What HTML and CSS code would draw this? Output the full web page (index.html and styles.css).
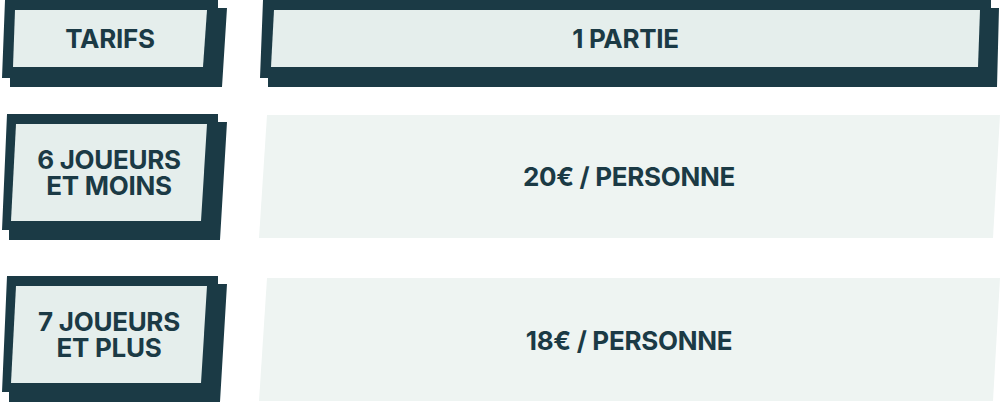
FILE: index.html
```html
<!DOCTYPE html>
<html lang="fr">
<head>
<meta charset="utf-8">
<title>Tarifs</title>
<link rel="stylesheet" href="styles.css">
</head>
<body>
<div class="table">
  <div class="row row-head">
    <div class="label label-head">
      <div class="label-inner label-inner-head">TARIFS</div>
    </div>
    <div class="head-wide">
      <div class="head-wide-inner">1 PARTIE</div>
    </div>
  </div>
  <div class="row row-2">
    <div class="label label-tall">
      <div class="label-inner label-inner-tall">6 JOUEURS<br>ET MOINS</div>
    </div>
    <div class="price">20€ / PERSONNE</div>
  </div>
  <div class="row row-3">
    <div class="label label-tall">
      <div class="label-inner label-inner-tall">7 JOUEURS<br>ET PLUS</div>
    </div>
    <div class="price">18€ / PERSONNE</div>
  </div>
</div>
</body>
</html>
```

FILE: styles.css
```css
html, body {
  margin: 0;
  padding: 0;
  background: #ffffff;
  overflow: hidden;
}

.table {
  width: 1000px;
  height: 403px;
  display: flex;
  flex-direction: column;
  font-family: Inter, "Liberation Sans", sans-serif;
  font-weight: 700;
  color: #1b3a45;
  font-size: 26px;
  letter-spacing: -0.3px;
}

.row {
  display: flex;
  align-items: flex-start;
}

.row-head { height: 87px; }
.row-2 { margin-top: 27px; height: 126px; }
.row-3 { margin-top: 36px; height: 127px; }

/* label boxes (dark frame with shadow) */
.label {
  width: 227px;
  background: #1b3a45;
  box-sizing: border-box;
  flex: none;
}

.label-head {
  height: 87px;
  padding: 10px 0 0 13px;
  clip-path: polygon(5px 0, 218px 0, 218px 8px, 227px 8px, 222px 87px, 10px 87px, 10px 78px, 2px 78px);
}

.label-tall {
  height: 126px;
  padding: 10px 0 0 11px;
  clip-path: polygon(7px 0, 218px 0, 218px 8px, 227px 8px, 220px 126px, 9px 126px, 9px 116px, 2px 116px);
}

.label-inner {
  background: #e5eeec;
  display: flex;
  align-items: center;
  justify-content: center;
  text-align: center;
  line-height: 26px;
}

.label-inner-head {
  width: 194px;
  height: 57px;
  clip-path: polygon(2px 0, 194px 0, 190px 57px, 0 57px);
}

.label-inner-tall {
  width: 196px;
  height: 97px;
  clip-path: polygon(5px 0, 196px 0, 190px 97px, 0 97px);
}

/* header wide box */
.head-wide {
  margin-left: 33px;
  width: 739px;
  height: 87px;
  box-sizing: border-box;
  padding: 10px 0 0 11px;
  background: #1b3a45;
  flex: none;
  clip-path: polygon(3px 0, 731px 0, 731px 8px, 739px 8px, 737px 87px, 8px 87px, 8px 78px, 0 78px);
}

.head-wide-inner {
  width: 709px;
  height: 57px;
  background: #e5eeec;
  display: flex;
  align-items: center;
  justify-content: center;
  clip-path: polygon(3px 0, 709px 0, 707px 57px, 0 57px);
}

/* price boxes */
.price {
  margin-left: 31px;
  margin-top: 1px;
  width: 742px;
  height: 123px;
  background: #eef4f2;
  display: flex;
  align-items: center;
  justify-content: center;
  flex: none;
  clip-path: polygon(9px 0, 742px 0, 735px 123px, 1px 123px);
}

.row-3 .price {
  margin-top: 2px;
  height: 124px;
}
```
